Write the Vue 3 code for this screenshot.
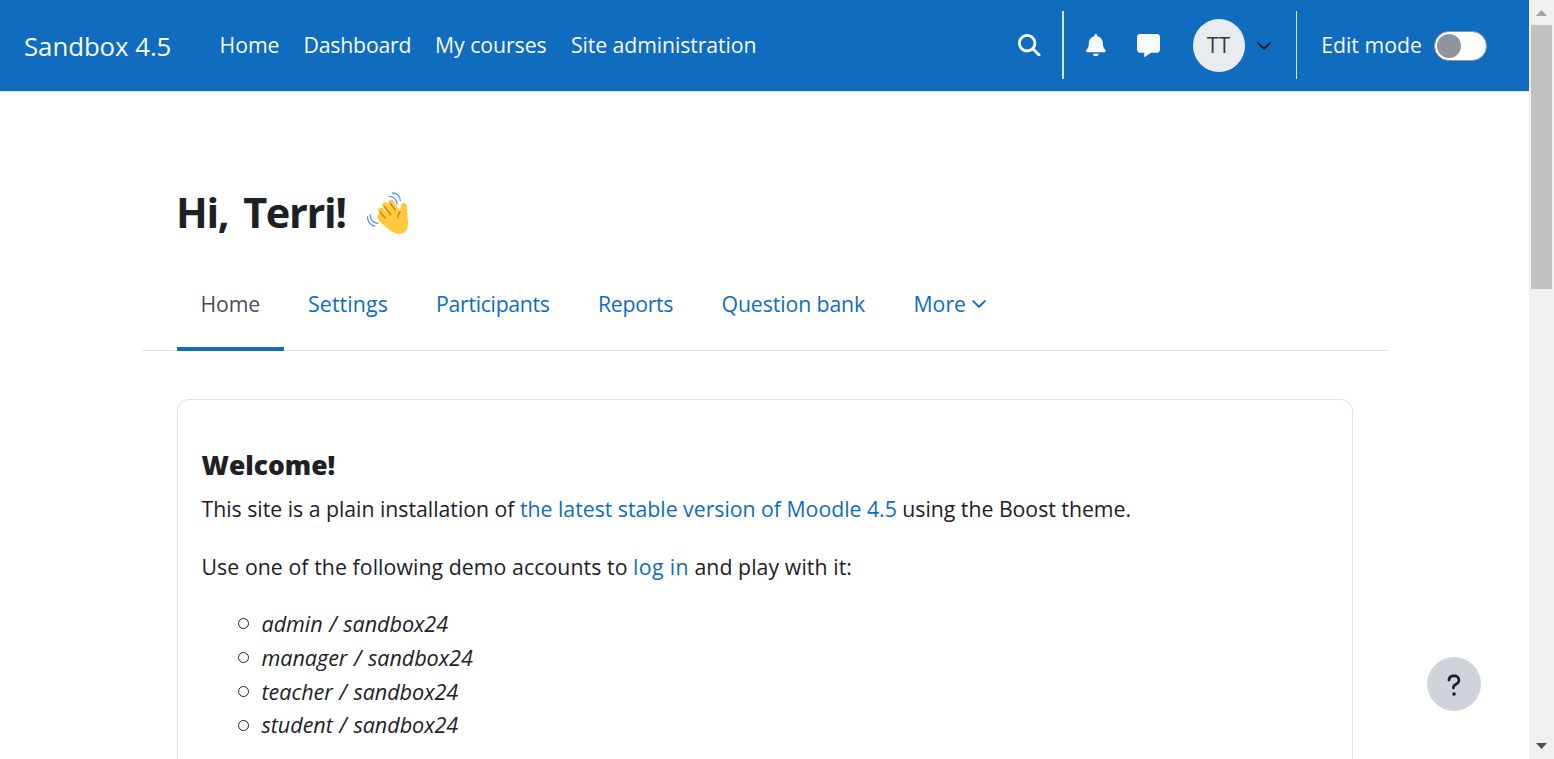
<script setup>
const navLinks = ['Home', 'Dashboard', 'My courses', 'Site administration']
const tabs = ['Home', 'Settings', 'Participants', 'Reports', 'Question bank']
const accounts = ['admin', 'manager', 'teacher', 'student']
</script>

<template>
  <div class="window">
    <div class="page">
      <nav class="navbar">
        <a class="brand">Sandbox 4.5</a>
        <a v-for="(link, i) in navLinks" :key="link" class="nav-link" :class="'nav-' + i">{{ link }}</a>
        <div class="tools">
          <svg class="icon search" viewBox="0 0 512 512"><path d="M416 208c0 45.9-14.9 88.3-40 122.7L502.6 457.4c12.5 12.5 12.5 32.8 0 45.3s-32.8 12.5-45.3 0L330.7 376c-34.4 25.2-76.8 40-122.7 40C93.1 416 0 322.9 0 208S93.1 0 208 0S416 93.1 416 208zM208 352a144 144 0 1 0 0-288 144 144 0 1 0 0 288z" /></svg>
          <span class="divider thick"></span>
          <svg class="icon bell" viewBox="0 0 448 512"><path d="M224 0c-17.7 0-32 14.3-32 32l0 19.2C119 66 64 130.6 64 208l0 18.8c0 47-17.3 92.4-48.5 127.6l-7.4 8.3c-8.4 9.4-10.4 22.9-5.3 34.4S19.4 416 32 416l384 0c12.6 0 24-7.4 29.2-18.9s3.1-25-5.3-34.4l-7.4-8.3C401.3 319.2 384 273.9 384 226.8l0-18.8c0-77.4-55-142-128-156.8L256 32c0-17.7-14.3-32-32-32zm45.3 493.3c12-12 18.7-28.3 18.7-45.3l-64 0-64 0c0 17 6.7 33.3 18.7 45.3s28.3 18.7 45.3 18.7s33.3-6.7 45.3-18.7z" /></svg>
          <svg class="icon message" viewBox="0 0 512 512"><path d="M64 0C28.7 0 0 28.7 0 64L0 352c0 35.3 28.7 64 64 64l96 0 0 80c0 6.1 3.4 11.6 8.8 14.3s11.9 2.1 16.8-1.5L309.3 416 448 416c35.3 0 64-28.7 64-64l0-288c0-35.3-28.7-64-64-64L64 0z" /></svg>
          <span class="avatar">TT</span>
          <svg class="chevron user-chevron" viewBox="0 0 14 8"><path d="M1.2 1.1 7 6.8l5.8-5.7" /></svg>
          <span class="divider"></span>
          <span class="edit-label">Edit mode</span>
          <span class="switch"><span class="knob"></span></span>
        </div>
      </nav>

      <main class="main">
        <header class="greeting">
          <h1>Hi, Terri!</h1>
          <svg class="wave" viewBox="0 0 44 44">
            <g class="hand">
              <path class="palm" d="M13.5 25.5 30.5 16.5 34.2 20.5C34.8 17.5 34.3 15 35.4 13.2C37 11 40.2 11.5 40.8 14.5C41.4 18 40.8 21 41.5 25.5C42.3 31 42.3 34.5 41.1 38C39.3 42.3 34.5 44 29.5 42.3C25 40.8 20.5 36.5 12.5 29.5Z" />
              <path d="M25 11.5 33 24M19 14 28 26M15 19.5 24 30M14 26 24 35" />
            </g>
            <path class="crease" d="M24.3 12.5 29.3 18.8M18.3 15.3 24.8 23.5M14 21.2 19.3 27M34.2 20.5C32.5 22.5 31.7 24.3 31.9 26.5" />
            <path class="motion" d="M26.3 2C30.5 2 34.3 5 34.3 9.7M23.3 5.3C27.5 5.5 30.7 8.5 30.9 13M1.5 25.7C1.3 30.5 4.3 34.5 8.7 35M4.2 24C4.2 28.5 7.5 32.2 11.8 32.3" />
          </svg>
        </header>

        <div class="tabs">
          <a v-for="(tab, i) in tabs" :key="tab" class="tab" :class="['tab-' + i, { active: i === 0 }]">{{ tab }}</a>
          <a class="tab more">More<svg class="chevron" viewBox="0 0 14 8"><path d="M1.2 1.1 7 6.8l5.8-5.7" /></svg></a>
        </div>

        <section class="card">
          <h5>Welcome!</h5>
          <p>This site is a plain installation of <a>the latest stable version of Moodle 4.5</a> using the Boost theme.</p>
          <p class="login">Use one of the following demo accounts to <a>log in</a> and play with it:</p>
          <ul>
            <li v-for="name in accounts" :key="name"><em>{{ name }} / sandbox24</em></li>
          </ul>
        </section>
      </main>

      <button class="help" aria-label="Help">
        <svg viewBox="0 0 320 512"><path d="M88 160c0-33 25-56 56-56l32 0c31 0 56 23 56 56l0 3.6c0 19-10 36-26 46l-42.2 27.1c-25.2 16.2-42 42-42 74l0 8c0 15 11 26 26 26s26-11 26-26l0-8c0-11 6-21 16-28l42.2-27.1c34-22 52-57 52-92l0-3.6c0-65-49-112-108-112l-32 0C81 48 32 95 32 160c0 16 12 28 28 28s28-12 28-28zm72 316a36 36 0 1 0 0-72 36 36 0 1 0 0 72z" /></svg>
      </button>
    </div>

    <div class="scrollbar">
      <svg class="arrow up" viewBox="0 0 11 6"><path d="M0 6 5.5 0 11 6Z" /></svg>
      <div class="thumb"></div>
      <svg class="arrow down" viewBox="0 0 11 6"><path d="M0 0H11L5.5 6Z" /></svg>
    </div>
  </div>
</template>

<style>
body { margin: 0; overflow: hidden; background: #fff; }
</style>

<style scoped>
* { box-sizing: border-box; }
.window {
  display: flex;
  width: 1554px;
  height: 759px;
  overflow: hidden;
  color: #1d2125;
  font: 21.25px/33.75px "Open Sans", "Noto Sans", sans-serif;
}
.page { position: relative; width: 1529px; height: 759px; overflow: hidden; }
.navbar {
  display: flex;
  align-items: center;
  height: 92px;
  padding: 0 42px 0 24px;
  background: #0f6cbf;
  border-bottom: 1px solid #dee2e6;
  color: #f8f9fa;
  white-space: nowrap;
}
.brand { width: 195.5px; font-size: 25.8px; padding-top: 2px; letter-spacing: -0.05px; }
.nav-link { margin-bottom: 1px; }
.nav-0 { width: 84px; }
.nav-1 { width: 131.5px; letter-spacing: -0.2px; }
.nav-2 { width: 136px; letter-spacing: -0.05px; }
.nav-3 { letter-spacing: -0.1px; }
.tools { display: flex; align-items: center; margin-left: auto; }
.icon { display: block; fill: #f8f9fa; height: 22.5px; margin-top: -1px; }
.search { width: 22.5px; margin-right: 21px; }
.divider { width: 1px; height: 68px; margin-bottom: 1px; background: #dee2e6; }
.divider.thick { width: 2px; margin-right: 22.5px; }
.bell { width: 19.7px; margin-right: 31px; }
.message { width: 23px; height: 23px; margin-right: 32.8px; }
.avatar {
  width: 52px;
  height: 53px;
  border-radius: 50%;
  background: #e9ecef;
  color: #343a40;
  text-align: center;
  line-height: 52px;
}
.chevron { width: 14px; height: 8px; fill: none; stroke: currentColor; stroke-width: 1.9; stroke-linecap: round; stroke-linejoin: round; }
.user-chevron { color: #1d2125; margin: 0 25px 0 12px; }
.edit-label { width: 137.5px; padding-left: 24.7px; margin-bottom: 1px; }
.switch {
  display: flex;
  align-items: center;
  width: 53px;
  height: 30px;
  margin-top: 1px;
  padding: 0 2px;
  border: 1px solid #8f959e;
  border-radius: 15px;
  background: #fff;
}
.knob { width: 24px; height: 24px; border-radius: 50%; background: #8f959e; }

.main { width: 1245px; margin-left: 142px; }
.greeting { display: flex; padding: 95px 0 0 34px; height: 168px; }
h1 { margin: 0; width: 190px; font-size: 41.5px; line-height: 50px; letter-spacing: -1.35px; word-spacing: 5.5px; font-weight: 700; white-space: nowrap; }
.wave { width: 44px; height: 44px; margin-top: 4px; }
.hand { fill: none; stroke: #ffc83d; stroke-width: 5.6; stroke-linecap: round; }
.palm { fill: #ffc83d; stroke: none; }
.crease { fill: none; stroke: #d67d00; stroke-width: 1.3; stroke-linecap: round; }
.motion { fill: none; stroke: #5092ff; stroke-width: 1.3; stroke-linecap: round; }
.tabs {
  display: flex;
  height: 91px;
  padding-left: 35px;
  border-bottom: 1px solid #dee2e6;
  color: #0f6cbf;
  white-space: nowrap;
}
.tab { height: 91px; padding: 27px 0 0 24px; }
.tab-0 { width: 107px; }
.tab-1 { width: 128px; letter-spacing: 0.15px; }
.tab-2 { width: 162px; letter-spacing: -0.3px; }
.tab-3 { width: 123.5px; letter-spacing: -0.3px; }
.tab-4 { width: 192px; letter-spacing: -0.1px; }
.active { padding-left: 23.5px; color: #495057; border-bottom: 4px solid #0f6cbf; letter-spacing: -0.1px; }
.more .chevron { margin-left: 6px; vertical-align: 4px; }
.card {
  width: 1176px;
  height: 420px;
  margin: 48px 0 0 35px;
  padding: 48px 23.5px 0;
  border: 1px solid #dee2e6;
  border-radius: 12px;
}
h5 { margin: 0 0 10px; font-size: 26.4px; font-weight: 800; line-height: 34px; }
p { margin: 0 0 24px; letter-spacing: -0.01px; }
p a { color: #0f6cbf; }
p.login { letter-spacing: 0.08px; }
.login a { letter-spacing: 0.35px; }
ul { margin: -0.5px 0 0; padding: 0 0 0 36.5px; list-style: none; }
li { display: flex; align-items: center; font-size: 21.6px; letter-spacing: -0.05px; word-spacing: 1px; }
li::before { content: ""; width: 9px; height: 9px; margin-right: 12.5px; border: 1px solid #1d2125; border-radius: 50%; }
.help {
  position: absolute;
  left: 1427px;
  top: 657px;
  display: flex;
  align-items: center;
  justify-content: center;
  width: 54px;
  height: 54px;
  padding: 1px 0 0;
  border: 0;
  border-radius: 50%;
  background: #ced4da;
}
.help svg { width: 16px; height: 25.6px; fill: #1d2125; }
.scrollbar { display: flex; flex-direction: column; align-items: center; width: 25px; height: 759px; background: #f0f0f0; }
.arrow { width: 11px; height: 6px; flex: none; }
.up { margin: 10px 0 9px; fill: #a3a3a3; }
.thumb { width: 21px; height: 264px; background: #c1c1c1; }
.down { margin: auto 0 10px; fill: #505050; }
</style>
